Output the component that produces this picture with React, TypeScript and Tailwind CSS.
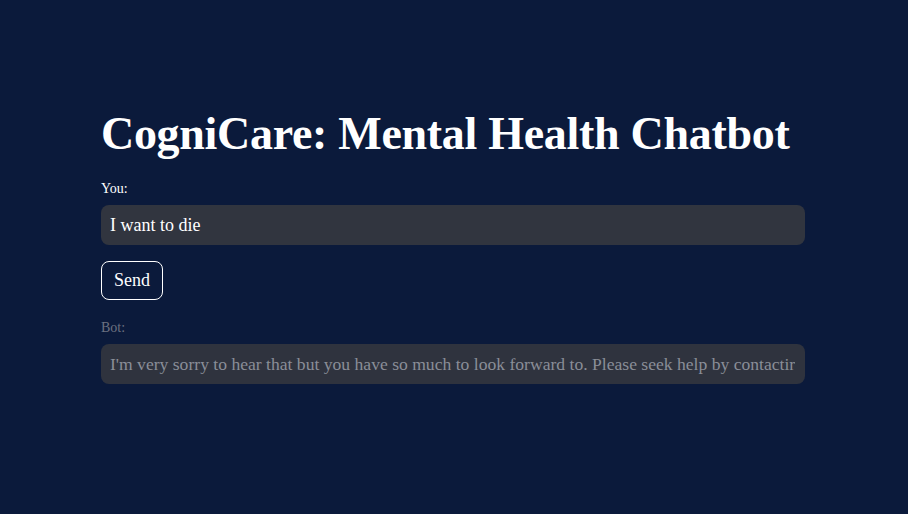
import React from "react";

export default function App() {
  const serif = { fontFamily: '"Liberation Serif", "DejaVu Serif", serif' };
  return (
    <div className="min-h-[514px] w-full bg-[#0b1a3b] pl-[101px] pt-[104px] text-white" style={serif}>
      <div className="w-[704px]">
        <h1 className="whitespace-nowrap text-[46px] font-bold leading-[60px] tracking-[-0.3px] text-white">
          CogniCare: Mental Health Chatbot
        </h1>
        <div className="mt-[15px] text-[14px] leading-[20px] text-white">You:</div>
        <div className="mt-[6px] flex h-[40px] items-center rounded-[8px] bg-[#31353f] px-[9px] text-[18px] text-white">
          I want to die
        </div>
        <button className="mt-[16px] h-[39px] rounded-[8px] border border-white bg-transparent px-[12px] text-[18px] text-white">
          Send
        </button>
        <div className="mt-[18px] text-[14px] leading-[20px] text-[#6b7180]">Bot:</div>
        <div className="mt-[6px] flex h-[40px] items-center overflow-hidden whitespace-nowrap rounded-[8px] bg-[#2f333e] px-[9px] text-[17.6px] text-[#8a8e98]">
          <span className="overflow-hidden">
            I'm very sorry to hear that but you have so much to look forward to. Please seek help by contactir
          </span>
        </div>
      </div>
    </div>
  );
}
